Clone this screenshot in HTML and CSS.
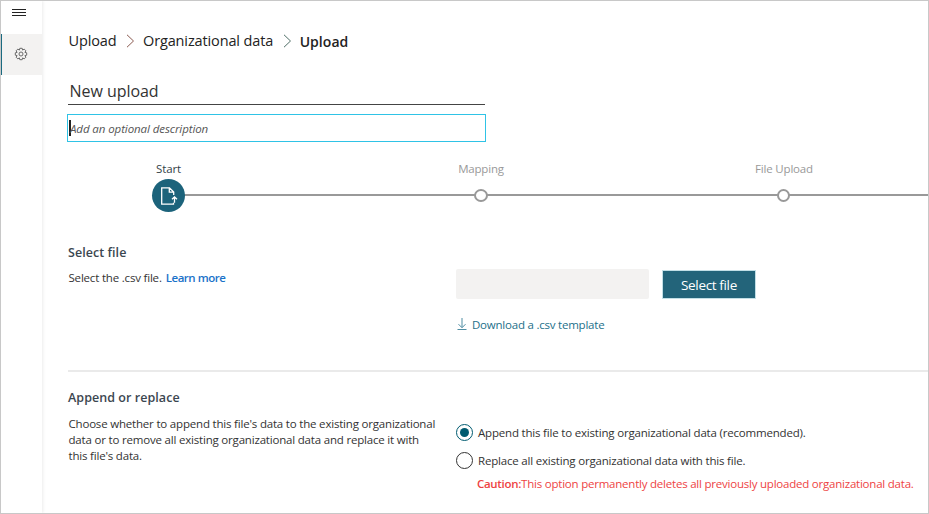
FILE: index.html
```html
<!DOCTYPE html>
<html lang="en">
<head>
<meta charset="utf-8">
<title>Upload</title>
<link rel="stylesheet" href="styles.css">
</head>
<body>
<div class="app">
  <nav class="sidebar">
    <button class="nav-item menu" aria-label="Menu">
      <svg width="14" height="9" viewBox="0 0 14 9" shape-rendering="crispEdges"><path d="M0 .5h14M0 3.5h14M0 6.5h14" stroke="#222" fill="none"/></svg>
    </button>
    <button class="nav-item active" aria-label="Settings">
      <svg width="14" height="15" viewBox="0 0 14 15" fill="none" stroke="#6b6b6b"><path d="M5.800 1.300h2.400l.4 1.800 1.600-1 1.700 1.700-1 1.600 1.800.4v2.400l-1.800.4 1 1.600-1.700 1.700-1.600-1-.4 1.800H5.800l-.4-1.800-1.600 1-1.700-1.700 1-1.600-1.800-.4V5.800l1.800-.4-1-1.600 1.700-1.700 1.600 1z"/><circle cx="7" cy="7" r="2"/></svg>
    </button>
  </nav>
  <main class="content">
    <div class="breadcrumb">
      <a class="crumb">Upload</a>
      <svg width="9" height="14" viewBox="0 0 9 14" fill="none" stroke="#8a5a50"><path d="M1 .8l6.500 6.200L1 13.200"/></svg>
      <a class="crumb">Organizational data</a>
      <svg width="9" height="14" viewBox="0 0 9 14" fill="none" stroke="#4e6e66"><path d="M1 .8l6.500 6.200L1 13.200"/></svg>
      <span class="crumb current">Upload</span>
    </div>
    <div class="upload-name"><span>New upload</span></div>
    <div class="description"><i class="caret"></i><span>Add an optional description</span></div>
    <div class="stepper">
      <div class="step start">
        <span class="label">Start</span>
        <div class="track"><span class="badge"><svg width="18" height="18" viewBox="0 0 18 18" fill="none" stroke="#fff" stroke-width="1.300"><path d="M13.700 8V5L9.500 .8H1.700v16.400h11.800v-1.500M9.300 1v4.200h4.200M14.500 15.700V10M12 12.200l2.500-2.400 2.500 2.400"/></svg></span></div>
      </div>
      <div class="step mapping">
        <span class="label">Mapping</span>
        <div class="track"><span class="dot"></span></div>
      </div>
      <div class="step file">
        <span class="label">File Upload</span>
        <div class="track"><span class="dot"></span></div>
      </div>
    </div>
    <section class="row select">
      <div class="info">
        <h2>Select file</h2>
        <p><span>Select the .csv file.</span><a class="learn">Learn more</a></p>
      </div>
      <div class="picker">
        <div class="controls"><div class="filebox"></div><button class="primary"><span>Select file</span></button></div>
        <a class="download"><svg width="10" height="13" viewBox="0 0 10 13" fill="none" stroke="#4f8da3"><path d="M5 0v9.500M1.500 6.200L5 9.700l3.500-3.500M.5 11.500h9"/></svg><span>Download a .csv template</span></a>
      </div>
    </section>
    <section class="row append">
      <div class="info">
        <h2>Append or replace</h2>
        <p><span>Choose whether to append this file's data to the existing organizational</span><br><span>data or to remove all existing organizational data and replace it with</span><br><span>this file's data.</span></p>
      </div>
      <div class="options">
        <label class="option"><span class="radio checked"></span><span class="text">Append this file to existing organizational data (recommended).</span></label>
        <label class="option"><span class="radio"></span><span class="text">Replace all existing organizational data with this file.</span></label>
        <p class="caution"><b>Caution:</b><span>This option permanently deletes all previously uploaded organizational data.</span></p>
      </div>
    </section>
  </main>
</div>
</body>
</html>
```
FILE: styles.css
```css
* { box-sizing: border-box; }
body { margin: 0; background: #fff; color: #333; font: 11.5px/16px "Open Sans", "Noto Sans", sans-serif; letter-spacing: -.19px; }
h2, p { margin: 0; }
button { padding: 0; border: 0; font: inherit; letter-spacing: inherit; }
svg { display: block; flex: none; }
span, a { white-space: nowrap; }
.app { display: flex; width: 929px; height: 514px; border: 1px solid #c8c8c8; overflow: hidden; }
.sidebar { width: 41px; flex: none; box-shadow: 1px 0 3px rgba(0,0,0,.08); }
.nav-item { display: flex; width: 41px; background: none; }
.menu { height: 33px; padding: 8px 0 0 11px; }
.active { height: 41px; padding: 13px 0 0 12px; background: #f3f2f1; border-left: 1px solid #1a6a80; }
.content { flex: 1; min-width: 0; padding-left: 26px; }

.breadcrumb { display: flex; align-items: center; height: 24px; margin-top: 28px; padding-left: .5px; font-size: 14.5px; letter-spacing: -.13px; color: #222; }
.breadcrumb svg { margin: 0 8px 0 9.5px; }
.current { padding-top: 1px; font-size: 14px; font-weight: 600; letter-spacing: .05px; }
.upload-name { width: 417px; height: 27px; margin-top: 25px; padding-left: 1.5px; border-bottom: 1px solid #444; font-size: 16px; line-height: 26px; letter-spacing: -.05px; }
.description { display: flex; align-items: center; width: 419px; height: 28px; margin: 9px 0 0 -1px; padding-left: 1px; border: 1px solid #2fc3e6; color: #555; font-style: italic; letter-spacing: -.09px; }
.description span { padding-top: 2px; }
.caret { width: 2px; height: 16px; margin-right: -1px; background: #222; }

.stepper { display: flex; height: 51px; margin-top: 19px; }
.step { flex: none; color: #999; }
.label { display: flex; justify-content: center; width: 100px; height: 17px; line-height: 16px; }
.start { width: 312px; margin-left: 51px; }
.mapping { width: 303px; }
.file { width: 200px; }
.start .label { width: 99px; color: #333f48; font-weight: 500; letter-spacing: -.1px; }
.track { display: flex; align-items: center; height: 34px; margin-right: -50px; padding-left: 43px; background: linear-gradient(#999, #999) 50px 16px / 100% 2px no-repeat; }
.start .track { padding-left: 33px; }
.dot { width: 14px; height: 13px; margin-top: 1px; border: 2px solid #999; border-radius: 50%; background: #fff; }
.file .dot { width: 13px; }
.badge { display: grid; place-items: center; width: 33px; height: 33px; margin-top: 1px; border-radius: 50%; background: #1c637b; }

.row { display: flex; }
.info { width: 388px; flex: none; }
.info p { padding-left: .5px; }
h2 { width: max-content; color: #3b4650; font-size: 12.5px; line-height: 18px; font-weight: 600; letter-spacing: .05px; }
.select { height: 160px; border-bottom: 2px solid #eaeaea; }
.select .info { padding-top: 32px; }
.select p { display: flex; margin-top: 8px; }
.learn { margin-left: 4px; color: #1a72c9; font-weight: 600; letter-spacing: -.48px; }
.controls { display: flex; align-items: flex-end; height: 30px; margin-top: 57px; }
.filebox { width: 193px; height: 30px; border-radius: 2px; background: #f3f2f1; }
.primary { width: 94px; height: 29px; margin-left: 13px; padding-top: 1px; background: #23647a; border: 1px solid #c2dfe6; color: #fff; font-size: 13.5px; letter-spacing: -.35px; }
.download { display: flex; align-items: center; height: 16px; margin-top: 17px; color: #23708a; letter-spacing: -.22px; }
.download svg { margin: 0 5px 0 1px; }
.download span { padding-top: 2px; }
.append .info { padding-top: 17px; }
.append .info p { margin-top: 9px; }
.options { padding-top: 46px; }
.option { display: flex; align-items: center; height: 28px; }
.option .text { padding-top: 2px; }
.radio { display: grid; place-items: center; width: 17px; height: 17px; margin-right: 5px; border: 1px solid #333; border-radius: 50%; }
.checked { border-color: #005b70; }
.checked::after { content: ""; width: 9px; height: 9px; border-radius: 50%; background: #005b70; }
.caution { margin: 2px 0 0 21px; color: #ee4343; white-space: nowrap; letter-spacing: -.22px; }
.caution b { font-weight: 600; letter-spacing: -.3px; }
```
